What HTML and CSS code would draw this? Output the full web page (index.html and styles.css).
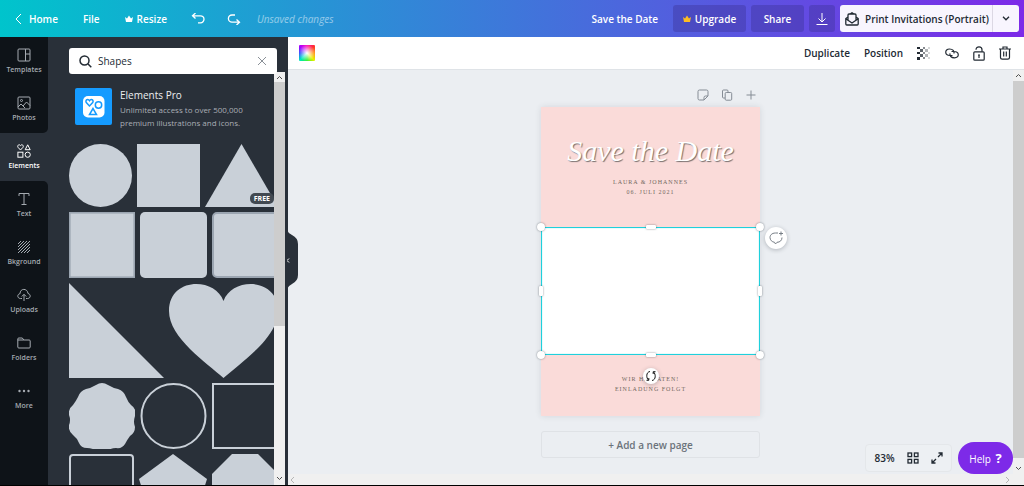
FILE: index.html
```html
<!DOCTYPE html>
<html lang="en">
<head>
<meta charset="utf-8">
<meta name="viewport" content="width=device-width, initial-scale=1">
<title>Save the Date</title>
<link rel="stylesheet" href="styles.css">
</head>
<body>
<div class="app">
  <header class="topbar">
    <nav class="topbar-left">
      <a class="nav-link home" href="#"><svg width="7" height="12" viewBox="0 0 7 12"><path d="M6 1 1 6l5 5"/></svg>Home</a>
      <button class="nav-link file">File</button>
      <button class="nav-link resize"><svg class="crown" width="8" height="8" viewBox="0 0 8 8"><path d="M0 2l2 1.500L4 .5l2 3L8 2 7 7H1z"/></svg>Resize</button>
      <button class="nav-link undo" aria-label="Undo"><svg width="14" height="12" viewBox="0 0 14 12"><path d="M4.500 0 1.500 2.800l3 2.800M1.500 2.800H9.500a3.500 3.500 0 0 1 0 7H7"/></svg></button>
      <button class="nav-link redo" aria-label="Redo"><svg width="14" height="12" viewBox="0 0 14 12"><path d="M9.500 6.500l3 2.800-3 2.700M12.500 9.200H5a3.600 3.600 0 0 1 0-7.200h3"/></svg></button>
      <span class="status">Unsaved changes</span>
    </nav>
    <div class="topbar-right">
      <span class="doc-title">Save the Date</span>
      <button class="btn upgrade"><svg class="crown gold" width="8" height="8" viewBox="0 0 8 8"><path d="M0 2l2 1.500L4 .5l2 3L8 2 7 7H1z"/></svg>Upgrade</button>
      <button class="btn share">Share</button>
      <button class="btn download" aria-label="Download"><svg width="12" height="12" viewBox="0 0 12 12"><path d="M6 0v8.500M2.500 5.500 6 9l3.500-3.500M.5 11.500h11"/></svg></button>
      <div class="print">
        <button class="print-main"><svg width="14" height="14" viewBox="0 0 14 14"><path d="M3 5 .8 6.500V12q0 1 1 1h10.400q1 0 1-1V6.500L11 5M.8 6.800 7 11l6.200-4.200M3 8V3q0-1 1-1h6q1 0 1 1v5M5 2l2-1.200L9 2"/></svg>Print Invitations (Portrait)</button>
        <button class="print-more" aria-label="More print options"><svg width="8" height="5" viewBox="0 0 8 5"><path d="M1 .8 4 3.800l3-3"/></svg></button>
      </div>
    </div>
  </header>

  <div class="workspace">
    <nav class="rail">
      <button class="rail-item"><svg width="14" height="14" viewBox="0 0 14 14"><rect x="1" y="1" width="12" height="12" rx="1"/><path d="M8.500 1v12M8.500 6H13"/></svg><span>Templates</span></button>
      <button class="rail-item before"><svg width="14" height="14" viewBox="0 0 14 14"><rect x="1" y="1" width="12" height="12" rx="1"/><circle cx="4.500" cy="4.500" r="1"/><path d="M1 11l3-3 2 2 3.500-4L13 9.500M6 10l2 2"/></svg><span>Photos</span></button>
      <button class="rail-item active"><svg width="14" height="14" viewBox="0 0 14 14"><path d="M3.500 6 1 3.300C-.2 1.500 2.300-.3 3.500 1.600 4.700-.3 7.200 1.500 6 3.300zM10.700.8 8.200 5.700h5z"/><rect x=".9" y="8.200" width="5" height="5"/><circle cx="10.700" cy="10.700" r="2.600"/></svg><span>Elements</span></button>
      <button class="rail-item after"><svg width="14" height="14" viewBox="0 0 14 14"><path d="M2 4V1.500h10V4M7 1.500v11M4.500 12.500h5"/></svg><span>Text</span></button>
      <button class="rail-item"><svg width="14" height="14" viewBox="0 0 14 14"><path d="M1 4l3-3M1 7l6-6M1 10l9-9M1 13 13 1M4 13l9-9M7 13l6-6M10 13l3-3"/></svg><span>Bkground</span></button>
      <button class="rail-item"><svg width="14" height="14" viewBox="0 0 14 14"><path d="M5 10.500H3.500C0 10.500 0 6 3 5.700 3 0 10.500 0 11 5.500c3 .5 3 5-.5 5H9M7 13V6.500M4.800 8.500 7 6.300l2.200 2.200"/></svg><span>Uploads</span></button>
      <button class="rail-item"><svg width="14" height="14" viewBox="0 0 14 14"><path d="M.8 11V3q0-1 1-1h3.500l1.500 2h5.400q1 0 1 1v6q0 1-1 1H1.800q-1 0-1-1zM.8 4h6"/></svg><span>Folders</span></button>
      <button class="rail-item"><svg class="dots" width="14" height="14" viewBox="0 0 14 14"><circle cx="2.500" cy="7" r="1.200"/><circle cx="7" cy="7" r="1.200"/><circle cx="11.500" cy="7" r="1.200"/></svg><span>More</span></button>
    </nav>

    <aside class="panel">
      <form class="search">
        <label for="q" aria-label="Search elements"><svg width="13" height="13" viewBox="0 0 13 13"><circle cx="5.500" cy="5.500" r="4.500"/><path d="M9 9l3.300 3.300"/></svg></label>
        <input id="q" type="text" value="Shapes">
        <button type="button" class="clear" aria-label="Clear search"><svg width="10" height="10" viewBox="0 0 10 10"><path d="M1 1l8 8M9 1 1 9"/></svg></button>
      </form>
      <div class="panel-body">
        <div class="results">
          <a class="promo" href="#">
            <span class="promo-icon"><svg width="37" height="37" viewBox="0 0 37 37"><rect x="8" y="8" width="21.500" height="21.500" rx="5" fill="#fff"/><g fill="none" stroke="#159bff" stroke-width="1.500"><path d="M14.500 18 11.300 14.600C9.800 12 13 10.300 14.500 12.700 16 10.300 19.200 12 17.700 14.600z"/><circle cx="23.500" cy="17" r="3.200"/><path d="M18 20.500 14.500 26.500h7z"/></g></svg></span>
            <span class="promo-text"><strong>Elements Pro</strong><span>Unlimited access to over 500,000 premium illustrations and icons.</span></span>
          </a>
          <div class="row">
            <button class="shape" aria-label="Circle"><svg width="63" height="63"><circle cx="31.500" cy="31.500" r="31.500"/></svg></button>
            <button class="shape" aria-label="Square"><svg width="63" height="63"><rect width="63" height="63"/></svg></button>
            <button class="shape" aria-label="Triangle"><svg width="73" height="63"><path d="M36.500 0 73 63H0z"/></svg></button>
            <span class="free">FREE</span>
          </div>
          <div class="row">
            <button class="shape" aria-label="Framed square"><svg width="66" height="66"><rect x=".8" y=".8" width="64.400" height="64.400" stroke="#9ba5b1" stroke-width="1.600"/></svg></button>
            <button class="shape" aria-label="Rounded square"><svg width="67" height="66"><rect width="67" height="66" rx="5"/></svg></button>
            <button class="shape" aria-label="Framed rounded square"><svg width="90" height="66"><rect x="1" y="1" width="88" height="64" rx="4" stroke="#9ba5b1" stroke-width="2"/></svg></button>
          </div>
          <div class="row">
            <button class="shape" aria-label="Right triangle"><svg width="95" height="95"><path d="M0 0 95 95H0z"/></svg></button>
            <button class="shape" aria-label="Heart"><svg width="109" height="95"><path d="M54.500 18C46-6 0-6 0 28c0 27 38 52 54.500 67C71 80 109 55 109 28 109-6 63-6 54.500 18z"/></svg></button>
          </div>
          <div class="row">
            <button class="shape" aria-label="Badge"><svg width="66" height="66" viewBox="0 0 66 66"><path d="M27 2q6-4 12 0 5 3 10 4 6 2 8 8 2 5 5 8 6 4 4 11-2 6 0 11 0 6-5 9-3 4-5 8-3 5-9 4-5 0-9 3-5 3-10 0-5-3-10-3-6 0-8-5-2-5-6-8-5-4-4-10 2-5 0-10-1-6 4-10 3-4 5-8 2-6 8-8 5-1 10-4z"/></svg></button>
            <button class="shape" aria-label="Ring"><svg class="line" width="67" height="66"><circle cx="33.500" cy="33" r="32"/></svg></button>
            <button class="shape" aria-label="Square outline"><svg class="line" width="90" height="66"><rect x="1" y="1" width="88" height="64"/></svg></button>
          </div>
          <div class="row">
            <button class="shape" aria-label="Rounded outline"><svg class="line" width="65" height="66"><rect x="1" y="1" width="63" height="64" rx="3"/></svg></button>
            <button class="shape" aria-label="Pentagon"><svg width="68" height="66"><path d="M34 0 68 25 55 66H13L0 25z"/></svg></button>
            <button class="shape" aria-label="Octagon"><svg width="66" height="66"><path d="M20 0h26l20 20v26L46 66H20L0 46V20z"/></svg></button>
          </div>
        </div>
        <div class="vscroll panel-scroll"><svg width="11" height="10" viewBox="0 0 11 10"><path d="M3 7l2.500-2.500L8 7"/></svg><i class="thumb"></i><svg width="11" height="12" viewBox="0 0 11 12"><path d="M3 4l2.500 2.500L8 4"/></svg></div>
      </div>
      <button class="collapse" aria-label="Collapse panel"><svg width="12" height="60" viewBox="0 0 12 60"><path class="tab" d="M0 0q1 3 5 5 6 3 6 9v31q0 6-6 9-4 2-5 5z"/><path class="arrow" d="M2 28.500 0 30.500l2 2"/></svg></button>
    </aside>

    <main class="editor">
      <div class="toolbar">
        <button class="swatch" aria-label="Colour"></button>
        <div class="tools">
          <button>Duplicate</button>
          <button>Position</button>
          <button aria-label="Transparency"><svg class="checker" width="14" height="14" viewBox="0 0 14 14"><g fill="#222a33"><path d="M0 1h3v2H0zM0 6h3v2H0zM0 11h3v3H0z"/><g opacity=".75"><path d="M3 3h3v3H3zM3 8h3v3H3z"/></g><g opacity=".55"><path d="M6 1h2v2H6zM6 6h2v2H6zM6 11h2v2H6z"/></g><g opacity=".35"><path d="M8 3h3v3H8zM8 8h3v3H8z"/></g><g opacity=".18"><path d="M11 1h2v2h-2zM11 6h2v2h-2zM11 11h2v2h-2z"/></g></g></svg></button>
          <button aria-label="Link"><svg width="14" height="14" viewBox="0 0 14 14"><path d="M7.500 9.500H5C-.6 9.500-.6 3 4.500 3 8 3 9.500 5 9 7.500M6.500 5.500H9c5.600 0 5.600 6.300.5 6.300C6 11.800 4.500 9.800 5 7.300"/></svg></button>
          <button aria-label="Lock"><svg width="12" height="15" viewBox="0 0 12 15"><rect x=".8" y="5.800" width="10.400" height="8.400" rx="1"/><path d="M3 3.800C3-.2 9-.2 9 3.800v2M6 9v3M5 9h2"/></svg></button>
          <button aria-label="Delete"><svg width="12" height="14" viewBox="0 0 12 14"><path d="M0 3h12M4 3V1h4v2M1.500 3v8.500q0 1.700 1.700 1.700h5.600q1.700 0 1.700-1.700V3M4.700 5.500v5M7.300 5.500v5"/></svg></button>
        </div>
      </div>
      <div class="stage">
        <div class="canvas">
          <div class="page-tools">
            <button aria-label="Notes"><svg width="12" height="12" viewBox="0 0 12 12"><path d="M7 11H2.500Q1 11 1 9.500v-7Q1 1 2.500 1h7Q11 1 11 2.500V7L7 11V8.500Q7 7 8.500 7H11"/></svg></button>
            <button aria-label="Copy page"><svg width="12" height="12" viewBox="0 0 12 12"><path d="M4 9H2.500q-1 0-1-1V2q0-1 1-1H6q1 0 1 1v1"/><rect x="4.200" y="3.500" width="6.500" height="7.700" rx="1"/></svg></button>
            <button aria-label="Add page"><svg width="12" height="12" viewBox="0 0 12 12"><path d="M6 1.500v9M1.500 6h9"/></svg></button>
          </div>
          <article class="card">
            <div class="card-top">
              <h1>Save the Date</h1>
              <p>LAURA &amp; JOHANNES<br>06. JULI 2021</p>
            </div>
            <div class="selection">
              <i class="dot nw"></i><i class="dot ne"></i><i class="dot sw"></i><i class="dot se"></i>
              <i class="bar n"></i><i class="bar s"></i><i class="bar w"></i><i class="bar e"></i>
              <button class="round comment" aria-label="Comment"><svg width="15" height="15" viewBox="0 0 15 15"><path d="M9 2H6.500C2.500 2 1 4.500 1 6.500 1 9 3 11 5.500 11.300L6.500 13l1.500-1.700c3 0 5-2 5-4.800M12 .5v4M10 2.500h4"/></svg></button>
              <button class="round rotate" aria-label="Rotate"><svg width="12" height="12" viewBox="0 0 12 12"><path d="M5 1.500C1 2 1 8 3.500 10M1.500 10.300h2.300V8M7 10.500C11 10 11 4 8.500 2M10.500 1.700H8.200V4"/></svg></button>
            </div>
            <div class="card-bottom"><p>WIR HEIRATEN!<br>EINLADUNG FOLGT</p></div>
          </article>
          <button class="add-page">+ Add a new page</button>
        </div>
        <div class="float">
          <div class="zoom">
            <button>83%</button>
            <button aria-label="Grid view"><svg width="12" height="12" viewBox="0 0 12 12"><rect x="1" y="1" width="3.600" height="3.600"/><rect x="7.400" y="1" width="3.600" height="3.600"/><rect x="1" y="7.400" width="3.600" height="3.600"/><rect x="7.400" y="7.400" width="3.600" height="3.600"/></svg></button>
            <button aria-label="Full screen"><svg width="12" height="12" viewBox="0 0 12 12"><path d="M7.500 1H11v3.500M11 1 7 5M4.500 11H1V7.500M1 11l4-4"/></svg></button>
          </div>
          <button class="help">Help <b>?</b></button>
        </div>
        <div class="vscroll stage-scroll"><svg width="11" height="11" viewBox="0 0 11 11"><path d="M3 7l2.500-2.500L8 7"/></svg><i class="thumb"></i><svg width="11" height="16" viewBox="0 0 11 16"><path d="M3 9l2.500 2.500L8 9"/></svg></div>
      </div>
      <div class="hscroll"><svg width="8" height="8" viewBox="0 0 8 8"><path d="M5 1 2 4l3 3"/></svg><svg width="8" height="8" viewBox="0 0 8 8"><path d="M3 1l3 3-3 3"/></svg></div>
    </main>
  </div>
</div>
</body>
</html>
```

FILE: styles.css
```css
* { box-sizing: border-box; }
body { margin: 0; font-family: "Open Sans", "Noto Sans", sans-serif; font-size: 10px; color: #222a33; }
button, input { font: inherit; color: inherit; border: 0; padding: 0; background: none; }
button { cursor: pointer; }
a { color: inherit; text-decoration: none; }
i { display: block; }
svg { display: block; flex: none; fill: none; stroke: currentColor; }

.app { display: flex; flex-direction: column; height: 100vh; overflow: hidden; border-bottom: 1px solid #000; }

/* Top bar */
.topbar { display: flex; flex: none; justify-content: space-between; align-items: center; height: 37px; padding: 0 5px 0 15px; color: #fff; background: linear-gradient(90deg, #00c4cc, #7d2ae8); font-weight: 600; }
.topbar-left, .topbar-right { display: flex; align-items: center; }
.nav-link { display: flex; align-items: center; }
.home { gap: 7px; }
.file { margin-left: 25px; }
.resize { gap: 4px; margin-left: 25px; }
.undo { margin-left: 24px; }
.redo { margin-left: 22px; }
.undo svg, .redo svg { stroke-width: 1.3; }
.status { margin-left: 16px; font-style: italic; font-weight: 400; opacity: .5; }
.crown { fill: #fff; stroke: none; }
.gold { fill: #fdbc22; }
.doc-title { margin-right: 15px; }
.btn { display: flex; align-items: center; justify-content: center; height: 27px; margin-right: 5px; border-radius: 3px; background: rgba(60, 50, 150, .4); }
.upgrade { gap: 4px; width: 73px; }
.share { width: 53px; }
.download { width: 26px; }
.print { display: flex; height: 27px; border-radius: 3px; background: #f8f5fe; color: #222a33; }
.print-main { display: flex; align-items: center; gap: 6px; width: 152px; padding-left: 5px; white-space: nowrap; }
.print-more { display: flex; align-items: center; justify-content: center; width: 27px; border-left: 1px solid #dcd8e4; }
.print svg { stroke-width: 1.3; }

/* Navigation rail */
.workspace { display: flex; flex: 1; min-height: 0; }
.rail { display: flex; flex: none; flex-direction: column; width: 48px; overflow: hidden; background: linear-gradient(#293039, #293039) 0 0 / 100% 200px no-repeat #0e1318; }
.rail-item { display: flex; flex: none; flex-direction: column; align-items: center; gap: 3px; width: 48px; height: 48px; padding-top: 11px; background: #0e1318; color: #a5abb1; font-size: 7px; line-height: 10px; font-weight: 600; }
.rail-item.active { background: #293039; color: #fff; }
.rail-item.before { border-radius: 0 0 5px 0; }
.rail-item.after { border-radius: 0 5px 0 0; }
.dots { fill: currentColor; stroke: none; }

/* Elements panel */
.panel { position: relative; z-index: 1; display: flex; flex: none; flex-direction: column; width: 240px; padding: 11px 3px 0 21px; background: #293039; }
.search { position: relative; z-index: 1; display: flex; flex: none; align-items: center; height: 26px; margin-right: 8px; padding: 0 10px; border-radius: 3px; background: #fff; }
.search label svg { stroke-width: 1.5; }
.search input { flex: 1; min-width: 0; margin-left: 6px; outline: 0; }
.clear { color: #8a9097; }
.panel-body { display: flex; flex: 1; min-height: 0; }
.results { flex: 1; min-width: 0; overflow: hidden; }
.promo { display: flex; gap: 8px; padding: 14px 0 18px 6px; color: #a9aeb5; font-size: 8px; line-height: 13px; }
.promo-icon { flex: none; height: 37px; border-radius: 2px; background: #159bff; overflow: hidden; }
.promo-icon svg { stroke: none; }
.promo-text { width: 132px; margin-bottom: -3px; }
.promo-text strong { display: block; color: #eceef0; font-size: 10px; line-height: 15px; font-weight: 400; }
.promo-text span { display: block; }
.row { position: relative; display: flex; gap: 5px; margin-bottom: 5px; }
.shape { flex: none; }
.shape svg { fill: #c9d0d8; stroke: none; }
.shape .line { fill: none; stroke: #c9d0d8; stroke-width: 2; }
.free { position: absolute; right: 0; bottom: 3px; padding: 0 4px; border-radius: 5px; background: #424951; color: #fff; font-size: 7px; line-height: 11px; font-weight: 700; }
.vscroll { display: flex; flex: none; flex-direction: column; width: 11px; background: #f0f0f0; color: #505050; }
.vscroll svg:last-child { margin-top: auto; }
.thumb { background: #cdcdcd; }
.panel-scroll { margin-top: -2px; }
.panel-scroll .thumb { height: 59%; }
.collapse { position: absolute; left: 239px; top: 193px; color: #fff; }
.collapse .tab { fill: #293039; stroke: none; }

/* Editor */
.editor { display: flex; flex: 1; flex-direction: column; min-width: 0; background: #ebeef2; }
.toolbar { display: flex; flex: none; align-items: center; justify-content: space-between; height: 33px; padding: 0 13px 0 11px; border-bottom: 1px solid #dfe3e7; background: #fff; font-weight: 600; }
.swatch { width: 16px; height: 16px; border-radius: 1px; background: radial-gradient(circle, #fff, transparent 75%), conic-gradient(from 45deg, #ff3030, #ff8a00, #e8f000, #20f020, #00e8c0, #2040ff, #b000ff, #ff00b0, #ff3030); }
.tools { display: flex; align-items: center; gap: 14px; }
.tools svg { stroke-width: 1.2; }
.tools .checker { stroke: none; }
.stage { position: relative; display: flex; flex: 1; min-height: 0; }
.canvas { display: flex; flex: 1; flex-direction: column; align-items: center; padding-top: 19px; }
.page-tools { display: flex; justify-content: flex-end; gap: 12px; width: 219px; padding: 0 3px 6px; color: #858c95; }
.card { width: 219px; flex: none; box-shadow: 0 0 6px rgba(40, 50, 60, .12); background: #fadbd9; color: #74695f; font-family: "Liberation Serif", serif; text-align: center; }
.card p { margin: 0; font-size: 6px; line-height: 10px; letter-spacing: 1px; }
.card-top { padding-top: 24px; height: 120px; }
.card h1 { margin: 0 0 6px; color: #fff; font-size: 30px; line-height: 40px; font-style: italic; font-weight: 400; text-shadow: 1px 1px 1px #77706f; }
.card-bottom { height: 61px; padding-top: 19px; }
.selection { position: relative; height: 128px; border: 1px solid #1fd0dc; box-shadow: inset 0 0 1px #1fd0dc; background: #fff; }
.dot, .bar { position: absolute; background: #fff; box-shadow: 0 0 2px rgba(40, 50, 60, .6); }
.dot { width: 8px; height: 8px; border-radius: 50%; }
.nw, .ne { top: -5px; }
.sw, .se { bottom: -5px; }
.nw, .sw { left: -5px; }
.ne, .se { right: -5px; }
.bar { border-radius: 1px; }
.n, .s { left: calc(50% - 5px); width: 10px; height: 4px; }
.n { top: -3px; }
.s { bottom: -3px; }
.w, .e { top: calc(50% - 5px); width: 4px; height: 10px; }
.w { left: -3px; }
.e { right: -3px; }
.round { position: absolute; display: flex; align-items: center; justify-content: center; border-radius: 50%; background: #fff; box-shadow: 0 1px 4px rgba(40, 50, 60, .3); }
.comment { top: -1px; right: -28px; width: 22px; height: 22px; color: #777e86; }
.rotate { left: calc(50% - 8px); bottom: -30px; width: 16px; height: 16px; color: #111; }
.add-page { width: 219px; height: 27px; margin-top: 15px; border: 1px solid #dfe2e6; border-radius: 3px; color: #6b737b; font-weight: 600; }
.float { position: absolute; right: 11px; bottom: 0; display: flex; align-items: center; gap: 6px; }
.zoom { display: flex; align-items: center; justify-content: center; gap: 12px; width: 87px; height: 28px; border: 1px solid #e4e7ea; border-radius: 4px; background: #edf0f3; font-weight: 600; }
.zoom svg { stroke-width: 1.3; }
.help { width: 55px; height: 32px; border-radius: 16px; background: #7d2ae8; color: #fff; }
.help b { margin-left: 2px; font-size: 13px; }
.stage-scroll .thumb { flex: 1; }
.hscroll { display: flex; flex: none; align-items: center; justify-content: space-between; height: 11px; padding: 0 13px 0 1px; background: #f0f0f0; color: #b5b5b5; }
```
